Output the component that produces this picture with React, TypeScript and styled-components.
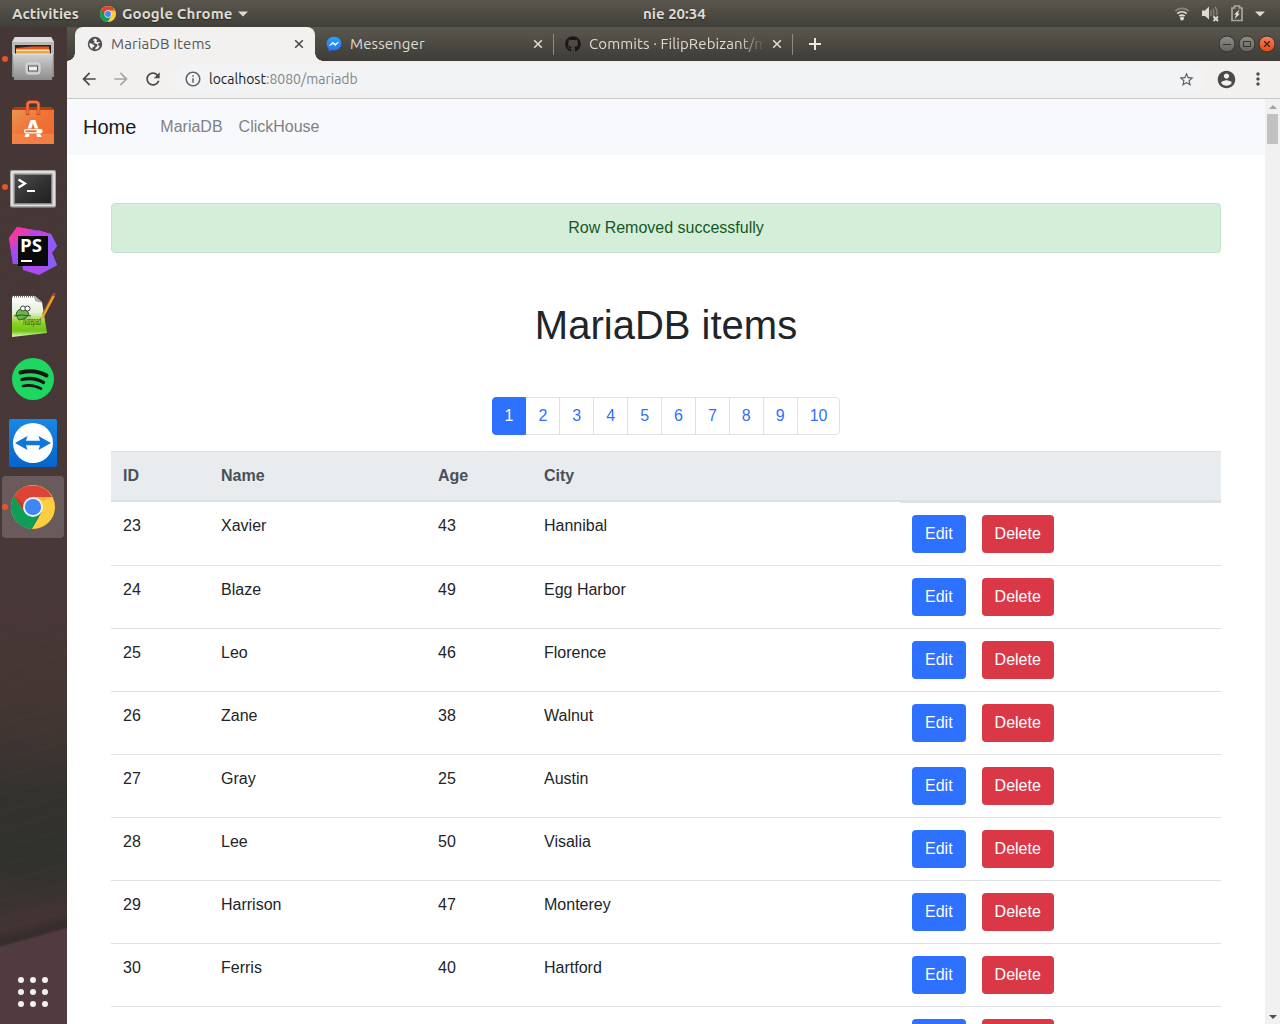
import React from 'react';
import styled, { createGlobalStyle, css } from 'styled-components';
import { FaGithub } from 'react-icons/fa';

const GlobalStyle = createGlobalStyle`
  *, *::before, *::after { box-sizing: border-box; }
  html, body { margin: 0; padding: 0; overflow: hidden; background: #fff; }
  svg { display: block; flex: none; }
`;

const uiFont = `"Ubuntu", "Noto Sans", sans-serif`;

const Desktop = styled.div`
  display: grid;
  grid-template: 27px 997px / 67px 1213px;
  width: 1280px;
  height: 1024px;
  overflow: hidden;
`;

const TopBar = styled.header`
  grid-column: 1 / -1;
  display: grid;
  grid-template-columns: 631px auto 1fr;
  align-items: center;
  padding: 0 15px 0 12px;
  background: linear-gradient(#5a564d, #403f39);
  color: #dfdbd2;
  font: 700 15px/27px ${uiFont};
  text-shadow: 0 1px 1px rgba(0, 0, 0, 0.5);
`;

const TopGroup = styled.div`
  display: flex;
  align-items: center;
`;

const Label = styled.span<{ $w?: number; $ls?: number }>`
  display: block;
  white-space: nowrap;
  width: ${(p) => (p.$w ? `${p.$w}px` : 'auto')};
  letter-spacing: ${(p) => p.$ls ?? 0}px;
`;

const AppMenu = styled.div`
  display: flex;
  align-items: center;
  gap: 6px;
  margin-left: 20px;
`;

const StatusIcons = styled(TopGroup)`
  justify-content: flex-end;
  gap: 12px;
`;

const Dock = styled.aside`
  display: flex;
  flex-direction: column;
  justify-content: space-between;
  background:
    linear-gradient(164.5deg, transparent 0 90.4%, #513b41 90.7%),
    linear-gradient(164.5deg, transparent 0 86%, rgba(74, 52, 54, 0.6) 89%, rgba(50, 42, 40, 0.5) 90%),
    repeating-linear-gradient(164.5deg, transparent 0 7px, rgba(80, 60, 55, 0.12) 8px 10px, transparent 11px 17px),
    linear-gradient(#463737 0, #483838 55%, #463735 64%, #403532 71%, #33322e 77%, #31312d 83%, #3a3330 89%, #3d3231 92%, #513b41 100%);
`;

const DockList = styled.div`
  display: flex;
  flex-direction: column;
  padding-top: 1px;
  gap: 2px;
`;

const DockItem = styled.div<{ $active?: boolean }>`
  position: relative;
  display: flex;
  align-items: center;
  justify-content: center;
  width: 62px;
  height: 62px;
  margin-left: 2px;
  border-radius: 4px;
  background: ${(p) => (p.$active ? '#695b5b' : 'transparent')};
`;

const RunningDot = styled.i`
  position: absolute;
  left: 0;
  top: 28px;
  width: 6px;
  height: 6px;
  border-radius: 50%;
  background: #e95420;
`;

const AppGrid = styled.div`
  display: grid;
  grid-template-columns: repeat(3, 6px);
  gap: 6px;
  padding: 0 0 17px 18px;
`;

const GridDot = styled.i`
  width: 6px;
  height: 6px;
  border-radius: 50%;
  background: #f1f1ef;
`;

const Browser = styled.main`
  display: grid;
  grid-template-rows: 34px 38px 925px;
  overflow: hidden;
`;

const TabStrip = styled.div`
  display: flex;
  align-items: stretch;
  padding-left: 8px;
  background: linear-gradient(#5b574e, #3d3c37);
  font: 400 15px/34px ${uiFont};
  color: #dfdbd2;
`;

const Tab = styled.div<{ $active?: boolean }>`
  position: relative;
  display: flex;
  align-items: center;
  gap: 8px;
  width: 239px;
  padding: 0 10px 0 11px;
  ${(p) =>
    p.$active
      ? css`
          width: 240px;
          padding: 0 10px 0 12px;
          color: #54575b;
          background: #f2f1f0;
          border-radius: 8px 8px 0 0;
          &::before,
          &::after {
            content: '';
            position: absolute;
            bottom: 0;
            width: 8px;
            height: 8px;
          }
          &::before {
            left: -8px;
            background: radial-gradient(circle at 0 0, transparent 7.5px, #f2f1f0 8px);
          }
          &::after {
            right: -8px;
            background: radial-gradient(circle at 100% 0, transparent 7.5px, #f2f1f0 8px);
          }
        `
      : css`
          &::after {
            content: '';
            position: absolute;
            right: 0;
            top: 7px;
            width: 1px;
            height: 21px;
            background: #8d8a83;
          }
        `}
`;

const TabTitle = styled.span<{ $fade?: boolean }>`
  flex: 1;
  overflow: hidden;
  white-space: nowrap;
  letter-spacing: 0.1px;
  ${(p) => p.$fade && 'mask-image: linear-gradient(90deg, #000 150px, transparent 176px);'}
`;

const NewTab = styled.div`
  display: flex;
  align-items: center;
  padding-left: 15px;
`;

const WindowButtons = styled.div`
  display: flex;
  align-items: center;
  gap: 2px;
  margin: 0 4px 0 auto;
`;

const Toolbar = styled.div`
  display: flex;
  align-items: center;
  padding: 0 12px 1px 12px;
  background: #f2f1f0;
  border-bottom: 1px solid #c9c8c7;
`;

const NavButtons = styled.div`
  display: flex;
  gap: 12px;
  margin-right: 12px;
`;

const AddressBar = styled.div`
  display: flex;
  align-items: center;
  flex: 1;
  height: 28px;
  margin-right: 12px;
  padding: 0 9px 0 9px;
  border-radius: 14px;
  background: #f1f3f4;
  color: #80868b;
  font: 400 14px/28px ${uiFont};
`;

const Url = styled.span`
  flex: 1;
  margin-left: 7px;
  b { font-weight: 400; color: #202124; }
`;

const ToolbarEnd = styled.div`
  display: flex;
  align-items: center;
  gap: 11px;
`;

const Viewport = styled.div`
  display: grid;
  grid-template-columns: 1198px 15px;
  overflow: hidden;
`;

const Page = styled.div`
  height: 925px;
  overflow: hidden;
  background: #fff;
  color: #212529;
  font: 400 16px/24px "Liberation Sans", Arial, sans-serif;
`;

const Navbar = styled.nav`
  display: flex;
  align-items: center;
  height: 56px;
  padding: 0 16px;
  background: #f8f9fc;
  color: #808183;
`;

const Brand = styled.span`
  margin-right: 24px;
  color: #18191a;
  font-size: 20px;
  line-height: 30px;
`;

const NavLink = styled.span`
  margin-right: 16px;
`;

const Container = styled.section`
  display: flex;
  flex-direction: column;
  width: 1110px;
  margin: 48px auto 0;
`;

const Alert = styled.div`
  padding: 12px 20px;
  border: 1px solid #c3e6cb;
  border-radius: 4px;
  background: #d5eeda;
  color: #155724;
  text-align: center;
`;

const Title = styled.h1`
  margin: 48px 0;
  font-size: 40px;
  font-weight: 400;
  line-height: 48px;
  text-align: center;
`;

const Pagination = styled.div`
  display: flex;
  justify-content: center;
  margin-bottom: 16px;
`;

const PageLink = styled.span<{ $active?: boolean }>`
  padding: 6px 12px;
  margin-left: -1px;
  border: 1px solid ${(p) => (p.$active ? '#2e70ff' : '#dee2e6')};
  background: ${(p) => (p.$active ? '#2e70ff' : '#fff')};
  color: ${(p) => (p.$active ? '#fff' : '#2e70ff')};
  z-index: ${(p) => (p.$active ? 1 : 0)};
  &:first-child { margin-left: 0; border-radius: 4px 0 0 4px; }
  &:last-child { border-radius: 0 4px 4px 0; }
`;

const Row = styled.div`
  display: grid;
  grid-template-columns: 98px 217px 106px 368px 321px;
`;

const HeadRow = styled(Row)`
  border-top: 1px solid #dee2e6;
  border-bottom: 2px solid #dce1e6;
  background: #e8ecef;
  color: #495057;
  font-weight: 700;
`;

const Cell = styled.div<{ $line?: boolean }>`
  padding: 12px;
  border-top: ${(p) => (p.$line ? '1px solid #dee2e6' : '0')};
`;

const Actions = styled(Cell)`
  display: flex;
  gap: 16px;
`;

const Button = styled.button<{ $danger?: boolean }>`
  height: 38px;
  padding: 6px 12px;
  border: 1px solid transparent;
  border-radius: 4px;
  background: ${(p) => (p.$danger ? '#da3847' : '#2e70ff')};
  color: #fff;
  font: inherit;
`;

const Scrollbar = styled.div`
  display: flex;
  flex-direction: column;
  align-items: center;
  justify-content: space-between;
  height: 925px;
  background: #f1f1f1;
`;

const Thumb = styled.div`
  width: 11px;
  height: 30px;
  margin-bottom: auto;
  background: #c1c1c1;
`;

const ScrollArrow = styled.div`
  display: flex;
  align-items: center;
  justify-content: center;
  width: 15px;
  height: 15px;
`;

const MaterialIcon = ({ d, color = '#4a4a4a', size = 20 }: { d: string; color?: string; size?: number }) => (
  <svg width={size} height={size} viewBox="0 0 24 24" fill={color}>
    <path d={d} />
  </svg>
);

const paths = {
  back: 'M20 11H7.83l5.59-5.59L12 4l-8 8 8 8 1.41-1.41L7.83 13H20v-2z',
  forward: 'M12 4l-1.41 1.41L16.17 11H4v2h12.17l-5.58 5.59L12 20l8-8z',
  reload:
    'M17.65 6.35C16.2 4.9 14.21 4 12 4c-4.42 0-7.99 3.58-7.99 8s3.57 8 7.99 8c3.73 0 6.84-2.55 7.73-6h-2.08c-.82 2.33-3.04 4-5.65 4-3.31 0-6-2.69-6-6s2.69-6 6-6c1.66 0 3.14.69 4.22 1.78L13 11h7V4l-2.35 2.35z',
  info: 'M11 7h2v2h-2zm0 4h2v6h-2zm1-9C6.48 2 2 6.48 2 12s4.48 10 10 10 10-4.48 10-10S17.52 2 12 2zm0 18c-4.41 0-8-3.59-8-8s3.59-8 8-8 8 3.59 8 8-3.59 8-8 8z',
  star: 'M22 9.24l-7.19-.62L12 2 9.19 8.63 2 9.24l5.46 4.73L5.82 21 12 17.27 18.18 21l-1.63-7.03L22 9.24zM12 15.4l-3.76 2.27 1-4.28-3.32-2.88 4.38-.38L12 6.1l1.71 4.04 4.38.38-3.32 2.88 1 4.28L12 15.4z',
  account:
    'M12 2C6.48 2 2 6.48 2 12s4.48 10 10 10 10-4.48 10-10S17.52 2 12 2zm0 3c1.66 0 3 1.34 3 3s-1.34 3-3 3-3-1.34-3-3 1.34-3 3-3zm0 14.2c-2.5 0-4.71-1.28-6-3.22.03-1.99 4-3.08 6-3.08 1.99 0 5.97 1.09 6 3.08-1.29 1.94-3.5 3.22-6 3.22z',
  more: 'M12 8c1.1 0 2-.9 2-2s-.9-2-2-2-2 .9-2 2 .9 2 2 2zm0 2c-1.1 0-2 .9-2 2s.9 2 2 2 2-.9 2-2-.9-2-2-2zm0 6c-1.1 0-2 .9-2 2s.9 2 2 2 2-.9 2-2-.9-2-2-2z',
};

const ChromeLogo = ({ size }: { size: number }) => (
  <svg width={size} height={size} viewBox="0 0 48 48">
    <circle cx="24" cy="24" r="24" fill="#ffcd40" />
    <path d="M24 24L33.4 29.5 22.8 48A24 24 0 0 1 3.2 12z" fill="#0f9d58" />
    <path d="M3.2 12A24 24 0 0 1 44.8 13.2H24L14.6 29.5z" fill="#db4437" />
    <path d="M24 13.2h20.8l-9.5 4z" fill="#d9a52f" opacity=".5" />
    <path d="M14.6 29.5L4 12l12 10z" fill="#a52714" opacity=".35" />
    <path d="M33.4 29.5L22.8 48l5-13z" fill="#08713d" opacity=".4" />
    <circle cx="24" cy="24" r="10.9" fill="#f1f1f1" />
    <circle cx="24" cy="24" r="8.8" fill="#4285f4" />
  </svg>
);

const GlobeIcon = () => (
  <svg width="16" height="16" viewBox="0 0 16 16">
    <circle cx="8" cy="8" r="7.2" fill="#4d4f52" />
    <path
      d="M8.300 2.500q-2 .3-2.200 1.900 1.700.2 1.500 1.700l-1.300.8q2.500.2 3.800 1.400 1 1.200-.2 2.300l-1.500 1.200-.2 1.600q3.300-.3 4.600-3l-1.500-1.200-.3-1.800 1.900-.4-.7-1.300-1.900.5-.9-.9.900-1.200z"
      fill="#f2f1f0"
    />
    <path d="M2.300 7.300q2.200-.2 3.500.9l1.700 1.300-.6 1.500-1.500.2-.1 1.800Q2.200 11.200 2.300 7.300z" fill="#f2f1f0" />
  </svg>
);

const Caret = () => (
  <svg width="10" height="6" viewBox="0 0 10 6" fill="#dfdbd2">
    <path d="M0 .5h10L5 5.5z" />
  </svg>
);

const CloseX = ({ color }: { color: string }) => (
  <svg width="12" height="12" viewBox="0 0 12 12" stroke={color} strokeWidth="1.6">
    <path d="M2.2 2.2l7.6 7.6M9.8 2.2L2.2 9.8" />
  </svg>
);

const MessengerLogo = () => (
  <svg width="16" height="16" viewBox="0 0 16 16">
    <defs>
      <linearGradient id="msg" x1="0" y1="0" x2="0" y2="1">
        <stop offset="0" stopColor="#1ea7fb" />
        <stop offset="1" stopColor="#2f6bff" />
      </linearGradient>
    </defs>
    <path d="M8 .8c4.2 0 7.4 2.9 7.4 6.8S12.200 14.400 8 14.400c-.8 0-1.500-.1-2.200-.3L2.700 15.700v-3C1.400 11.500.6 9.700.6 7.600.6 3.700 3.800.8 8 .8z" fill="url(#msg)" />
    <path d="M3.600 9.500l3-3.300 2.500 1.900 3.300-2-3 3.400-2.500-1.900z" fill="#fff" stroke="#fff" strokeWidth=".8" strokeLinejoin="round" />
  </svg>
);

const WindowButton = ({ kind }: { kind: 'min' | 'max' | 'close' }) => (
  <svg width="18" height="18" viewBox="0 0 18 18" fill="none">
    <defs>
      <linearGradient id={`wb-${kind}`} x1="0" y1="0" x2="0" y2="1">
        <stop offset="0" stopColor={kind === 'close' ? '#f4835f' : '#8f8d86'} />
        <stop offset="1" stopColor={kind === 'close' ? '#df4a16' : '#65635d'} />
      </linearGradient>
    </defs>
    <circle cx="9" cy="9" r="8" fill={`url(#wb-${kind})`} stroke="#33322e" />
    {kind === 'min' && <path d="M5 9.500h8" stroke="#33322e" />}
    {kind === 'max' && <path d="M5.500 6.500h7v5h-7z" stroke="#33322e" />}
    {kind === 'close' && <path d="M6.200 6.200l5.600 5.600M11.800 6.200l-5.600 5.600" stroke="#4a1c0a" strokeWidth="1.300" />}
  </svg>
);

const WifiIcon = () => (
  <svg width="16" height="16" viewBox="0 0 16 16" fill="none" stroke="#dfdbd2" strokeWidth="1.700">
    <path d="M1.200 5.200a9.500 9.500 0 0 1 13.600 0" stroke="#85827a" />
    <path d="M3.300 7.700a6.600 6.600 0 0 1 9.400 0M5.300 10.200a3.800 3.800 0 0 1 5.400 0" />
    <circle cx="8" cy="12.500" r="2" fill="#dfdbd2" stroke="none" />
  </svg>
);

const VolumeIcon = () => (
  <svg width="17" height="16" viewBox="0 0 17 16" fill="none">
    <path d="M0 4.500h3l4-4v13L3 10H0z" fill="#dfdbd2" />
    <path d="M8.500 4.500q1.500 2.700 0 5.500M10.700 2.700q2.500 4 .3 8M13 .7q3.200 4.500 1.500 8.500" stroke="#85827a" strokeWidth="1.500" />
    <path d="M11.500 10.500l4.500 4.500M16 10.500l-4.500 4.500" stroke="#dfdbd2" strokeWidth="1.900" />
  </svg>
);

const BatteryIcon = () => (
  <svg width="12" height="17" viewBox="0 0 12 17" fill="none">
    <path d="M1 3h2.500V1h5v2H11v12.500H1z" stroke="#aaa79f" strokeWidth="1.700" />
    <path d="M8.500 4.500L3 9.500h2.200L3.500 14 9 8.800H6.900z" fill="#dfdbd2" />
  </svg>
);

const FilesIcon = () => (
  <svg width="48" height="48" viewBox="0 0 48 48">
    <defs>
      <linearGradient id="cab" x1="0" y1="0" x2="0" y2="1">
        <stop offset="0" stopColor="#d0d0d0" />
        <stop offset="1" stopColor="#8d8d8d" />
      </linearGradient>
    </defs>
    <path d="M5 3q0-1 1-1h36q1 0 1 1l2 4v35h-2v2q0 1-1 1H6q-1 0-1-1v-2H3V7z" fill="#8f8f8f" />
    <path d="M6 2h36l3 5H3z" fill="#dcdcdc" />
    <path d="M3 7h42v12H3z" fill="#b9b9b9" />
    <path d="M6 10h36v10H6z" fill="#282522" />
    <path d="M7 13l16-1.500H40V20H7z" fill="#e65a1a" />
    <path d="M7 14.500h33.500V16H7z" fill="#ffe8bb" />
    <path d="M7 16h34v4H7z" fill="#f6a33c" />
    <path d="M4 19h40l-1 26H5z" fill="url(#cab)" />
    <path d="M4 19h40" stroke="#e5e5e5" />
    <rect x="17" y="28" width="14" height="11" rx="2.500" fill="#c8c8c8" stroke="#dedede" />
    <rect x="19.500" y="31" width="9" height="5" fill="#eee" stroke="#555" />
  </svg>
);

const SoftwareIcon = () => (
  <svg width="48" height="48" viewBox="0 0 48 48">
    <defs>
      <linearGradient id="bag" x1="0" y1="0" x2="1" y2="1">
        <stop offset="0" stopColor="#ea9553" />
        <stop offset=".5" stopColor="#ef7134" />
        <stop offset="1" stopColor="#ee6a2e" />
      </linearGradient>
    </defs>
    <path d="M3 10l3-2h36l3 2v4H3z" fill="#b83c10" />
    <path d="M3 11h42v34H3z" fill="url(#bag)" />
    <path d="M3 35h42v10H3z" fill="#fa8f58" opacity=".5" />
    <path d="M18.500 16V6q0-3 3-3h5q3 0 3 3v10" fill="none" stroke="#cf4514" strokeWidth="3.500" />
    <path d="M18.500 15V6q0-3 3-3h5q3 0 3 3v9" fill="none" stroke="#f07743" strokeWidth="2" />
    <text x="24" y="37.500" textAnchor="middle" fontFamily="Open Sans, sans-serif" fontWeight="700" fontSize="24" fill="#fff">A</text>
    <rect x="14" y="29.500" width="20" height="6" fill="#ef7438" />
    <path d="M17 35l-1.500 2.500h4L20.500 35zM27.500 35l1 2.500h4L31 35z" fill="#fff" />
    <rect x="15" y="30" width="18.500" height="4.500" rx="2" fill="#fff" />
    <rect x="16.500" y="31.300" width="11" height="1.900" fill="#ed6a2c" />
  </svg>
);

const TerminalIcon = () => (
  <svg width="48" height="48" viewBox="0 0 48 48">
    <defs>
      <linearGradient id="term" x1="0" y1="0" x2="1" y2="1">
        <stop offset="0" stopColor="#4e4e4e" />
        <stop offset=".5" stopColor="#333" />
        <stop offset="1" stopColor="#202020" />
      </linearGradient>
    </defs>
    <rect x="1" y="7" width="46" height="37.500" rx="2" fill="#a8a8a8" />
    <rect x="2" y="8" width="44" height="35" rx="1" fill="#dedede" />
    <rect x="4.500" y="10.500" width="39" height="31" fill="#858585" />
    <rect x="6" y="12" width="36" height="28" fill="url(#term)" />
    <path d="M9.500 16.500l6.500 4-6.500 4" fill="none" stroke="#fff" strokeWidth="2.200" />
    <path d="M18 28h8" stroke="#fff" strokeWidth="2" />
  </svg>
);

const PhpStormIcon = () => (
  <svg width="48" height="48" viewBox="0 0 48 48">
    <defs>
      <linearGradient id="ps" x1="0" y1="0" x2=".5" y2="1">
        <stop offset="0" stopColor="#ff318c" />
        <stop offset=".35" stopColor="#e93bb2" />
        <stop offset=".6" stopColor="#a649ed" />
        <stop offset="1" stopColor="#8b55f8" />
      </linearGradient>
    </defs>
    <path d="M8 0l17 3 6 1 11 3 6 12-5 7 5 12-18 10-16-5-1-6H4L0 11z" fill="#a94df1" />
    <path d="M8 0l17 3v10H11v24H4L0 11z" fill="url(#ps)" />
    <path d="M25 9l4-6 13 4-2 8z" fill="#c043e6" />
    <path d="M38 9l4-2 6 12-7 9z" fill="#8a5df8" />
    <path d="M39 30l4-4 5 12-11 6z" fill="#8d5cf6" />
    <rect x="9" y="9" width="30" height="30" fill="#090909" />
    <text x="11" y="25" fontFamily="Open Sans, sans-serif" fontWeight="700" fontSize="17" fill="#fff" textLength="22" lengthAdjust="spacingAndGlyphs">PS</text>
    <path d="M12 34h11" stroke="#fff" strokeWidth="2" />
  </svg>
);

const NotepadIcon = () => (
  <svg width="48" height="48" viewBox="0 0 48 48">
    <defs>
      <linearGradient id="pad" x1="0" y1="0" x2="0" y2="1">
        <stop offset="0" stopColor="#fff" />
        <stop offset=".4" stopColor="#e4f0d8" />
        <stop offset=".65" stopColor="#8fd21e" />
        <stop offset=".85" stopColor="#6fc41a" />
        <stop offset="1" stopColor="#e6f8c8" />
      </linearGradient>
    </defs>
    <path d="M3 5h23l7 6 5 31-35 4z" fill="url(#pad)" />
    <path d="M3 5.500h22" stroke="#777" strokeWidth="2" strokeDasharray="1 1" />
    <path d="M25 5l8 6-6-1z" fill="#bbb" stroke="#777" strokeWidth=".6" />
    <path d="M7 24q1-7 8-6 5 2 5 6-4 5-10 5z" fill="#65b944" stroke="#315c2d" />
    <circle cx="14" cy="17.500" r="2.500" fill="#fff" stroke="#444" />
    <circle cx="18.500" cy="17.500" r="2.500" fill="#fff" stroke="#444" />
    <path d="M5 25q7-2 17 0" fill="none" stroke="#643536" />
    <text x="14" y="34" fontFamily="Liberation Sans, sans-serif" fontStyle="italic" fontSize="10" fill="#36581a" textLength="18" lengthAdjust="spacingAndGlyphs">Notepad</text>
    <path d="M32 30l1.500-7L43.500 4l2.500 1-10.500 20z" fill="#eda223" />
    <path d="M33.500 23L43.500 4" stroke="#ad6212" />
    <path d="M43.200 4.500l1.500-3 2 1-1.500 3z" fill="#d43b35" />
  </svg>
);

const SpotifyIcon = () => (
  <svg width="48" height="48" viewBox="0 0 48 48" fill="none" stroke="#191414" strokeLinecap="round">
    <circle cx="24" cy="24" r="21" fill="#1ed760" stroke="none" />
    <path d="M11.500 17.500q14-3.800 26 3" strokeWidth="4" />
    <path d="M13 24.500q11.500-3 21.500 3" strokeWidth="3.300" />
    <path d="M14 31q9.500-2.200 18 2.700" strokeWidth="2.700" />
  </svg>
);

const TeamViewerIcon = () => (
  <svg width="48" height="48" viewBox="0 0 48 48">
    <defs>
      <linearGradient id="tv" x1="0" y1="0" x2="0" y2="1">
        <stop offset="0" stopColor="#1788e5" />
        <stop offset="1" stopColor="#0564cd" />
      </linearGradient>
    </defs>
    <rect width="48" height="48" rx="2" fill="url(#tv)" />
    <circle cx="24" cy="24" r="20" fill="#fff" />
    <path d="M6 24l12.500-7-1.500 4.800h14L29.500 17 42 24l-12.500 7 1.500-4.800H17l1.500 4.800z" fill="#0e77d8" />
  </svg>
);

const dockApps = [
  { icon: <FilesIcon />, running: true },
  { icon: <SoftwareIcon /> },
  { icon: <TerminalIcon />, running: true },
  { icon: <PhpStormIcon /> },
  { icon: <NotepadIcon /> },
  { icon: <SpotifyIcon /> },
  { icon: <TeamViewerIcon /> },
  { icon: <ChromeLogo size={44} />, running: true, active: true },
];

const people: [number, string, number, string][] = [
  [23, 'Xavier', 43, 'Hannibal'],
  [24, 'Blaze', 49, 'Egg Harbor'],
  [25, 'Leo', 46, 'Florence'],
  [26, 'Zane', 38, 'Walnut'],
  [27, 'Gray', 25, 'Austin'],
  [28, 'Lee', 50, 'Visalia'],
  [29, 'Harrison', 47, 'Monterey'],
  [30, 'Ferris', 40, 'Hartford'],
];

const RowActions = ({ labelled = true }: { labelled?: boolean }) => (
  <Actions $line>
    <Button style={labelled ? undefined : { width: 54 }}>{labelled && 'Edit'}</Button>
    <Button $danger style={labelled ? undefined : { width: 72 }}>{labelled && 'Delete'}</Button>
  </Actions>
);

export default function App() {
  return (
    <>
      <GlobalStyle />
      <Desktop>
        <TopBar>
          <TopGroup>
            <Label $w={68}>Activities</Label>
            <AppMenu>
              <ChromeLogo size={16} />
              <Label $w={110} $ls={0.12}>Google Chrome</Label>
              <Caret />
            </AppMenu>
          </TopGroup>
          <Label>nie 20:34</Label>
          <StatusIcons>
            <WifiIcon />
            <VolumeIcon />
            <BatteryIcon />
            <Caret />
          </StatusIcons>
        </TopBar>

        <Dock>
          <DockList>
            {dockApps.map((app, i) => (
              <DockItem key={i} $active={app.active}>
                {app.running && <RunningDot />}
                {app.icon}
              </DockItem>
            ))}
          </DockList>
          <AppGrid>
            {Array.from({ length: 9 }, (_, i) => (
              <GridDot key={i} />
            ))}
          </AppGrid>
        </Dock>

        <Browser>
          <TabStrip>
            <Tab $active>
              <GlobeIcon />
              <TabTitle>MariaDB Items</TabTitle>
              <CloseX color="#4a4a4a" />
            </Tab>
            <Tab>
              <MessengerLogo />
              <TabTitle>Messenger</TabTitle>
              <CloseX color="#dfdbd2" />
            </Tab>
            <Tab>
              <FaGithub size={16} color="#191717" />
              <TabTitle $fade>Commits · FilipRebizant/m</TabTitle>
              <CloseX color="#dfdbd2" />
            </Tab>
            <NewTab>
              <svg width="14" height="14" viewBox="0 0 14 14" stroke="#ece9e3" strokeWidth="2">
                <path d="M7 1v12M1 7h12" />
              </svg>
            </NewTab>
            <WindowButtons>
              <WindowButton kind="min" />
              <WindowButton kind="max" />
              <WindowButton kind="close" />
            </WindowButtons>
          </TabStrip>

          <Toolbar>
            <NavButtons>
              <MaterialIcon d={paths.back} />
              <MaterialIcon d={paths.forward} color="#a5a5a5" />
              <MaterialIcon d={paths.reload} />
            </NavButtons>
            <AddressBar>
              <MaterialIcon d={paths.info} size={18} color="#5f6368" />
              <Url><b>localhost</b>:8080/mariadb</Url>
              <MaterialIcon d={paths.star} size={17} color="#5a5e63" />
            </AddressBar>
            <ToolbarEnd>
              <MaterialIcon d={paths.account} size={21} />
              <MaterialIcon d={paths.more} />
            </ToolbarEnd>
          </Toolbar>

          <Viewport>
            <Page>
              <Navbar>
                <Brand>Home</Brand>
                <NavLink>MariaDB</NavLink>
                <NavLink>ClickHouse</NavLink>
              </Navbar>
              <Container>
                <Alert>Row Removed successfully</Alert>
                <Title>MariaDB items</Title>
                <Pagination>
                  {Array.from({ length: 10 }, (_, i) => (
                    <PageLink key={i} $active={i === 0}>{i + 1}</PageLink>
                  ))}
                </Pagination>
                <HeadRow>
                  <Cell>ID</Cell>
                  <Cell>Name</Cell>
                  <Cell>Age</Cell>
                  <Cell>City</Cell>
                </HeadRow>
                {people.map(([id, name, age, city], i) => (
                  <Row key={id}>
                    <Cell $line={i > 0}>{id}</Cell>
                    <Cell $line={i > 0}>{name}</Cell>
                    <Cell $line={i > 0}>{age}</Cell>
                    <Cell $line={i > 0}>{city}</Cell>
                    <RowActions />
                  </Row>
                ))}
                <Row>
                  <Cell $line />
                  <Cell $line />
                  <Cell $line />
                  <Cell $line />
                  <RowActions labelled={false} />
                </Row>
              </Container>
            </Page>
            <Scrollbar>
              <ScrollArrow>
                <svg width="8" height="4" viewBox="0 0 8 4" fill="#a3a3a3"><path d="M0 4h8L4 0z" /></svg>
              </ScrollArrow>
              <Thumb />
              <ScrollArrow>
                <svg width="8" height="4" viewBox="0 0 8 4" fill="#505050"><path d="M0 0h8L4 4z" /></svg>
              </ScrollArrow>
            </Scrollbar>
          </Viewport>
        </Browser>
      </Desktop>
    </>
  );
}
